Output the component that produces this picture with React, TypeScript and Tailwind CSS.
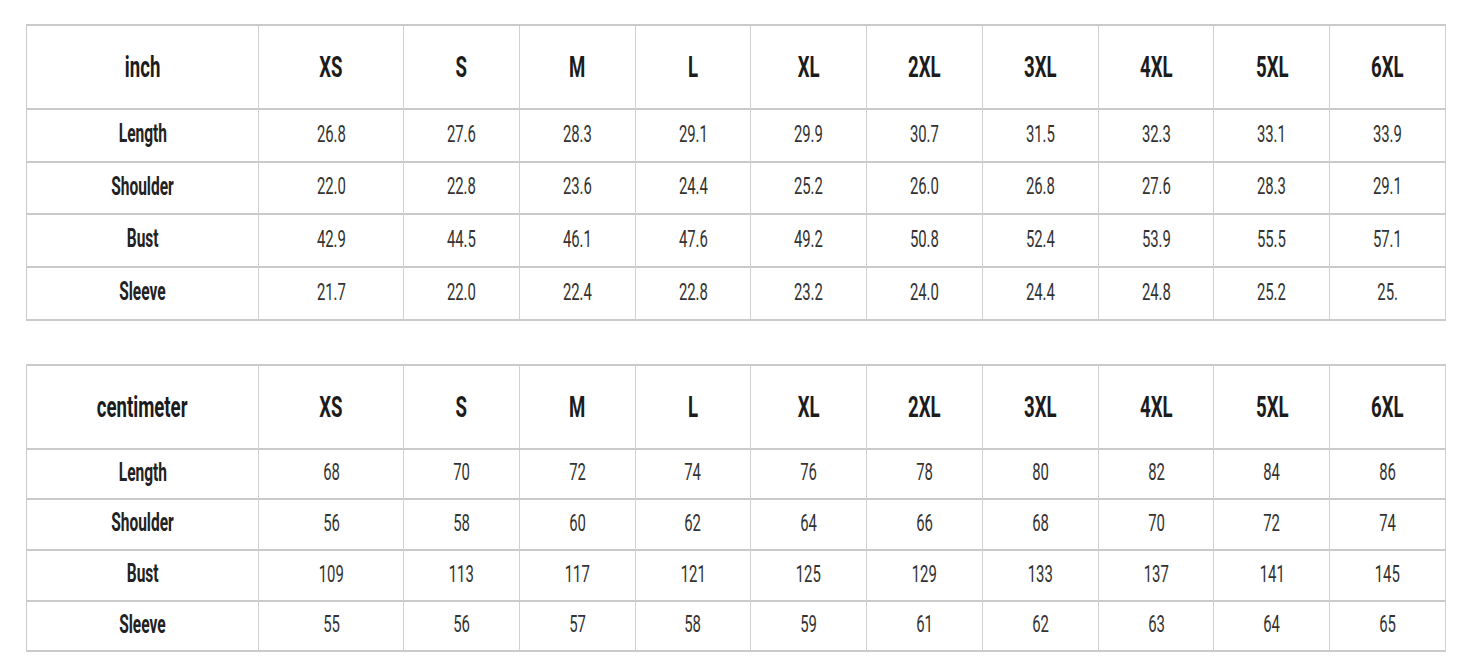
import React from "react";

const sizes = ["XS", "S", "M", "L", "XL", "2XL", "3XL", "4XL", "5XL", "6XL"];

type Table = {
  unit: string;
  rows: { label: string; values: string[] }[];
  rowHeights: string[];
};

const inchTable: Table = {
  unit: "inch",
  rowHeights: ["h-[53px]", "h-[52px]", "h-[53px]", "h-[53px]"],
  rows: [
    { label: "Length", values: ["26.8", "27.6", "28.3", "29.1", "29.9", "30.7", "31.5", "32.3", "33.1", "33.9"] },
    { label: "Shoulder", values: ["22.0", "22.8", "23.6", "24.4", "25.2", "26.0", "26.8", "27.6", "28.3", "29.1"] },
    { label: "Bust", values: ["42.9", "44.5", "46.1", "47.6", "49.2", "50.8", "52.4", "53.9", "55.5", "57.1"] },
    { label: "Sleeve", values: ["21.7", "22.0", "22.4", "22.8", "23.2", "24.0", "24.4", "24.8", "25.2", "25."] },
  ],
};

const cmTable: Table = {
  unit: "centimeter",
  rowHeights: ["h-[50px]", "h-[51px]", "h-[51px]", "h-[50px]"],
  rows: [
    { label: "Length", values: ["68", "70", "72", "74", "76", "78", "80", "82", "84", "86"] },
    { label: "Shoulder", values: ["56", "58", "60", "62", "64", "66", "68", "70", "72", "74"] },
    { label: "Bust", values: ["109", "113", "117", "121", "125", "129", "133", "137", "141", "145"] },
    { label: "Sleeve", values: ["55", "56", "57", "58", "59", "61", "62", "63", "64", "65"] },
  ],
};

const cellBase =
  "flex items-center justify-center border-r border-b-2 border-r-[#d0d0d0] border-b-[#cacaca] overflow-hidden";

function Txt({ children, kind }: { children: React.ReactNode; kind: "head" | "label" | "value" }) {
  const cls =
    kind === "head"
      ? "text-[30px] font-bold text-[#1c1c1c]"
      : kind === "label"
      ? "text-[25px] font-bold text-[#222222] -translate-y-[2px]"
      : "text-[24px] font-normal text-[#333333] -translate-y-[2px]";
  return (
    <span
      className={`inline-block whitespace-nowrap leading-none scale-x-[0.62] ${cls}`}
      style={{ fontFamily: "Roboto, 'Liberation Sans', sans-serif" }}
    >
      {children}
    </span>
  );
}

function SizeTable({ t }: { t: Table }) {
  return (
    <div className="w-[1420px] grid grid-cols-[232px_145px_repeat(9,minmax(0,1fr))] border-t-2 border-l border-t-[#cacaca] border-l-[#cacaca]">
      <div className={`${cellBase} h-[84px]`}>
        <Txt kind="head">{t.unit}</Txt>
      </div>
      {sizes.map((s) => (
        <div key={s} className={`${cellBase} h-[84px]`}>
          <Txt kind="head">{s}</Txt>
        </div>
      ))}
      {t.rows.map((r, i) => (
        <React.Fragment key={r.label}>
          <div className={`${cellBase} ${t.rowHeights[i]}`}>
            <Txt kind="label">{r.label}</Txt>
          </div>
          {r.values.map((v, j) => (
            <div key={j} className={`${cellBase} ${t.rowHeights[i]}`}>
              <Txt kind="value">{v}</Txt>
            </div>
          ))}
        </React.Fragment>
      ))}
    </div>
  );
}

export default function App() {
  return (
    <div className="w-[1475px] h-[671px] bg-white pl-[26px] pt-[24px] flex flex-col gap-[43px]">
      <SizeTable t={inchTable} />
      <SizeTable t={cmTable} />
    </div>
  );
}
